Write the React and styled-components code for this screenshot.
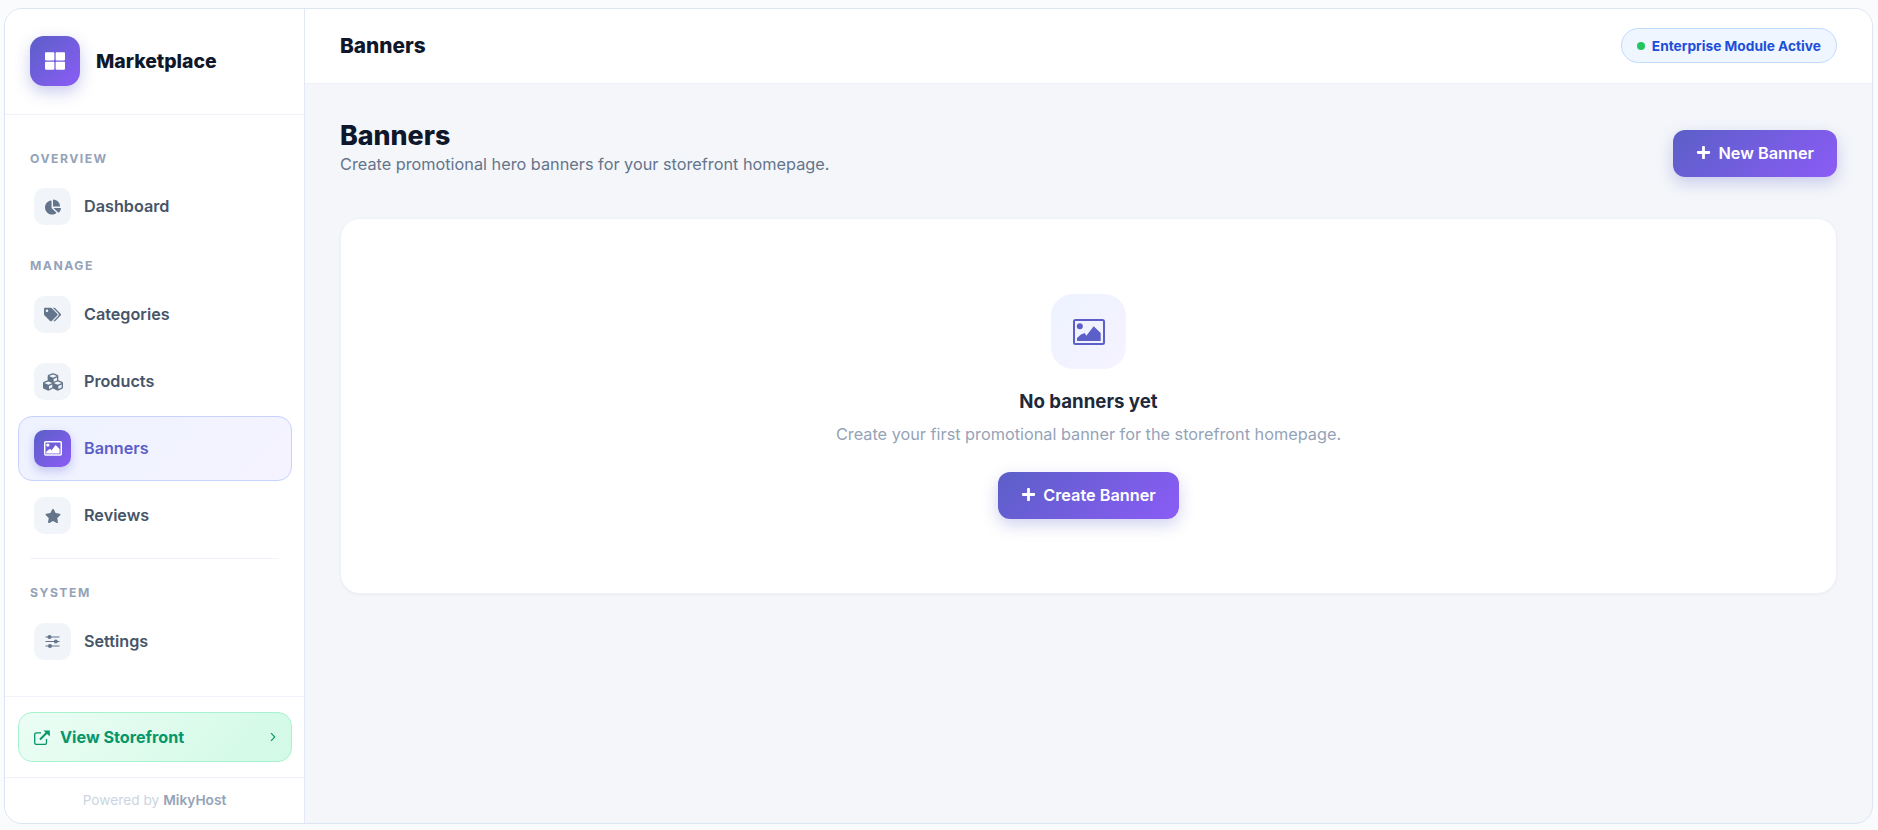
import React from "react";
import styled, { createGlobalStyle } from "styled-components";
import { FaThLarge, FaChartPie, FaTags, FaCubes, FaStar, FaPlus } from "react-icons/fa";

const Global = createGlobalStyle`
  html, body { margin: 0; height: 100%; background: #fafbfc; }
  #root { height: 100%; }
  * { box-sizing: border-box; }
  body { font-family: Inter, "Noto Sans", sans-serif; }
`;

const GRADIENT = "linear-gradient(135deg, #5b5fc7, #8b5cf6)";

const Page = styled.div`
  height: 830px;
  padding: 8px 5px 6px 4px;
`;
const Shell = styled.div`
  height: 100%;
  display: flex;
  background: #f4f6fa;
  border: 1px solid #dde5f3;
  border-radius: 18px;
  overflow: hidden;
`;
const Sidebar = styled.aside`
  width: 300px;
  flex: none;
  display: flex;
  flex-direction: column;
  background: #fff;
  border-right: 1px solid #e2e8f5;
`;
const Brand = styled.div`
  height: 106px;
  flex: none;
  display: flex;
  align-items: center;
  gap: 16px;
  padding: 0 25px 1px;
  border-bottom: 1px solid #f1f3fa;
`;
const Logo = styled.div`
  width: 50px;
  height: 50px;
  border-radius: 14px;
  background: ${GRADIENT};
  color: #fff;
  display: flex;
  align-items: center;
  justify-content: center;
  font-size: 20px;
  box-shadow: 0 6px 16px rgba(91, 95, 199, 0.32);
`;
const BrandName = styled.div`
  font-size: 19.4px;
  font-weight: 800;
  color: #0f172a;
`;
const Nav = styled.nav`
  flex: 1;
  padding: 36px 12px 0 13px;
  display: flex;
  flex-direction: column;
`;
const SectionLabel = styled.div`
  font-size: 12.2px;
  line-height: 16px;
  font-weight: 700;
  letter-spacing: 1.5px;
  color: #94a3b8;
  padding-left: 12px;
  margin-bottom: ${(p) => p.$gap || 8}px;
`;
const NavItem = styled.div`
  height: 65px;
  display: flex;
  align-items: center;
  gap: 13px;
  padding: 0 15px;
  border: 1px solid ${(p) => (p.$active ? "#c7d2fe" : "transparent")};
  border-radius: 14px;
  background: ${(p) => (p.$active ? "linear-gradient(135deg, #eef2ff, #f5f3ff)" : "transparent")};
  margin-bottom: 2px;
  color: ${(p) => (p.$active ? "#5b5fc7" : "#475569")};
  font-size: 16.2px;
  font-weight: 600;
`;
const NavLabel = styled.span`
  margin-bottom: 2px;
`;
const NavIcon = styled.div`
  width: 37px;
  height: 37px;
  flex: none;
  border-radius: 10px;
  display: flex;
  align-items: center;
  justify-content: center;
  color: ${(p) => (p.$active ? "#fff" : "#64748b")};
  background: ${(p) => (p.$active ? GRADIENT : "#f1f5f9")};
  box-shadow: ${(p) => (p.$active ? "0 4px 10px rgba(91, 95, 199, 0.3)" : "none")};
`;
const Group = styled.div`
  margin-top: ${(p) => p.$top || 0}px;
`;
const Divider = styled.div`
  height: 1px;
  background: #f1f3fa;
  margin: 8px 13px 26px 12px;
`;
const FooterLink = styled.div`
  flex: none;
  padding: 15px 12px 15px 13px;
  border-top: 1px solid #f1f3fa;
  border-bottom: 1px solid #f1f3fa;
`;
const StoreButton = styled.div`
  height: 50px;
  display: flex;
  align-items: center;
  gap: 10px;
  padding: 0 15px;
  border: 1px solid #a7f3d0;
  border-radius: 14px;
  background: linear-gradient(135deg, #ecfdf5, #d1fae5);
  color: #059669;
  font-size: 16.2px;
  font-weight: 700;
`;
const Chevron = styled.svg`
  margin-left: auto;
  width: 6px;
  height: 10px;
`;
const Powered = styled.div`
  height: 45px;
  flex: none;
  display: flex;
  align-items: center;
  justify-content: center;
  gap: 4px;
  padding-bottom: 1px;
  font-size: 13.7px;
  color: #cbd5e1;
`;
const PoweredName = styled.b`
  font-weight: 600;
  color: #94a3b8;
`;
const Main = styled.main`
  flex: 1;
  min-width: 0;
  display: flex;
  flex-direction: column;
`;
const TopBar = styled.header`
  height: 75px;
  flex: none;
  display: flex;
  align-items: center;
  justify-content: space-between;
  padding: 0 35px 1px;
  background: #fff;
  border-bottom: 1px solid #eef1f7;
`;
const TopTitle = styled.div`
  font-size: 20.8px;
  font-weight: 800;
  color: #0f172a;
`;
const Pill = styled.div`
  height: 35px;
  display: flex;
  align-items: center;
  gap: 7px;
  padding: 0 15px;
  border: 1px solid #bfdbfe;
  border-radius: 18px;
  background: #eff6ff;
  color: #1d4ed8;
  font-size: 13.72px;
  font-weight: 700;
`;
const Dot = styled.span`
  width: 8px;
  height: 8px;
  border-radius: 50%;
  background: #22c55e;
`;
const Content = styled.div`
  flex: 1;
  padding: 46px 35px 0;
`;
const PageHead = styled.div`
  display: flex;
  align-items: flex-start;
  justify-content: space-between;
  margin-bottom: 41px;
`;
const Heading = styled.h1`
  margin: -13px 0 0;
  font-size: 26.8px;
  line-height: 36px;
  font-weight: 800;
  color: #0f172a;
`;
const SubHeading = styled.p`
  margin: 0;
  font-size: 16.27px;
  line-height: 22px;
  color: #64748b;
`;
const PrimaryButton = styled.button`
  height: 47px;
  display: flex;
  align-items: center;
  gap: 7px;
  padding: 0 23px 2px;
  border: none;
  border-radius: 12px;
  background: ${GRADIENT};
  color: #fff;
  font-family: inherit;
  font-size: 16.3px;
  font-weight: 600;
  box-shadow: 0 6px 16px rgba(91, 95, 199, 0.28);
`;
const Card = styled.section`
  height: 376px;
  display: flex;
  flex-direction: column;
  align-items: center;
  padding-top: 75px;
  background: #fff;
  border: 1px solid #eef1f7;
  border-radius: 20px;
  box-shadow: 0 1px 3px rgba(15, 23, 42, 0.04);
`;
const EmptyIcon = styled.div`
  width: 75px;
  height: 75px;
  border-radius: 22px;
  display: flex;
  align-items: center;
  justify-content: center;
  background: linear-gradient(135deg, #eef2ff, #f5f3ff);
  color: #5b5fc7;
`;
const EmptyTitle = styled.div`
  margin-top: 20px;
  font-size: 18.65px;
  line-height: 24px;
  font-weight: 700;
  color: #1e293b;
`;
const EmptyText = styled.div`
  margin-top: 9px;
  font-size: 16.27px;
  line-height: 24px;
  color: #94a3b8;
`;
const EmptyAction = styled.div`
  margin-top: 26px;
`;

const ImageIcon = ({ width, stroke }) => (
  <svg width={width} viewBox="0 0 32 26" fill="none">
    <rect x={stroke / 2} y={stroke / 2} width={32 - stroke} height={26 - stroke} rx="1.5"
      stroke="currentColor" strokeWidth={stroke} />
    <circle cx="6.8" cy="7.3" r="3" fill="currentColor" />
    <path d="M4 22V19l4-3.6 3.7-1.4 1.6 2.7 7.4-9.4 7 6.7v8z" fill="currentColor" />
  </svg>
);

const SlidersIcon = () => (
  <svg width="15" height="13" viewBox="0 0 15 13" fill="none">
    <path d="M0.5 2h14M0.5 6.5h14M0.5 11h14" stroke="currentColor" strokeWidth="1.2" />
    <circle cx="4.5" cy="2" r="2" fill="currentColor" />
    <circle cx="10.8" cy="6.5" r="2" fill="currentColor" />
    <circle cx="5" cy="11" r="2" fill="currentColor" />
  </svg>
);

const ExternalIcon = () => (
  <svg width="16" height="15" viewBox="0 0 16 15" fill="none">
    <path d="M7 2.8H2.4C1.5 2.8 .7 3.5 .7 4.5v8.3c0 .9.8 1.6 1.7 1.6h8.5c.9 0 1.6-.7 1.6-1.6V9"
      stroke="currentColor" strokeWidth="1.3" />
    <path d="M6 9.5 14 1.5" stroke="currentColor" strokeWidth="2" />
    <path d="M9.5 .4H15.8V6.6z" fill="currentColor" />
  </svg>
);

const Item = ({ icon, label, active }) => (
  <NavItem $active={active}>
    <NavIcon $active={active}>{icon}</NavIcon>
    <NavLabel>{label}</NavLabel>
  </NavItem>
);

export default function App() {
  return (
    <Page>
      <Global />
      <Shell>
        <Sidebar>
          <Brand>
            <Logo><FaThLarge /></Logo>
            <BrandName>Marketplace</BrandName>
          </Brand>
          <Nav>
            <SectionLabel $gap={7}>OVERVIEW</SectionLabel>
            <Item icon={<FaChartPie size={16} />} label="Dashboard" />
            <Group $top={17}>
              <SectionLabel>MANAGE</SectionLabel>
              <Item icon={<FaTags size={17} />} label="Categories" />
              <Item icon={<FaCubes size={20} />} label="Products" />
              <Item icon={<ImageIcon width={18} stroke={2.6} />} label="Banners" active />
              <Item icon={<FaStar size={16} />} label="Reviews" />
            </Group>
            <Divider />
            <SectionLabel>SYSTEM</SectionLabel>
            <Item icon={<SlidersIcon />} label="Settings" />
          </Nav>
          <FooterLink>
            <StoreButton>
              <ExternalIcon />
              View Storefront
              <Chevron viewBox="0 0 7 11" fill="none">
                <path d="M1.2 1 5.6 5.5 1.2 10" stroke="currentColor" strokeWidth="1.3" />
              </Chevron>
            </StoreButton>
          </FooterLink>
          <Powered>Powered by <PoweredName>MikyHost</PoweredName></Powered>
        </Sidebar>
        <Main>
          <TopBar>
            <TopTitle>Banners</TopTitle>
            <Pill><Dot />Enterprise Module Active</Pill>
          </TopBar>
          <Content>
            <PageHead>
              <div>
                <Heading>Banners</Heading>
                <SubHeading>Create promotional hero banners for your storefront homepage.</SubHeading>
              </div>
              <PrimaryButton><FaPlus size={15} />New Banner</PrimaryButton>
            </PageHead>
            <Card>
              <EmptyIcon><ImageIcon width={32} stroke={2} /></EmptyIcon>
              <EmptyTitle>No banners yet</EmptyTitle>
              <EmptyText>Create your first promotional banner for the storefront homepage.</EmptyText>
              <EmptyAction>
                <PrimaryButton><FaPlus size={15} />Create Banner</PrimaryButton>
              </EmptyAction>
            </Card>
          </Content>
        </Main>
      </Shell>
    </Page>
  );
}
